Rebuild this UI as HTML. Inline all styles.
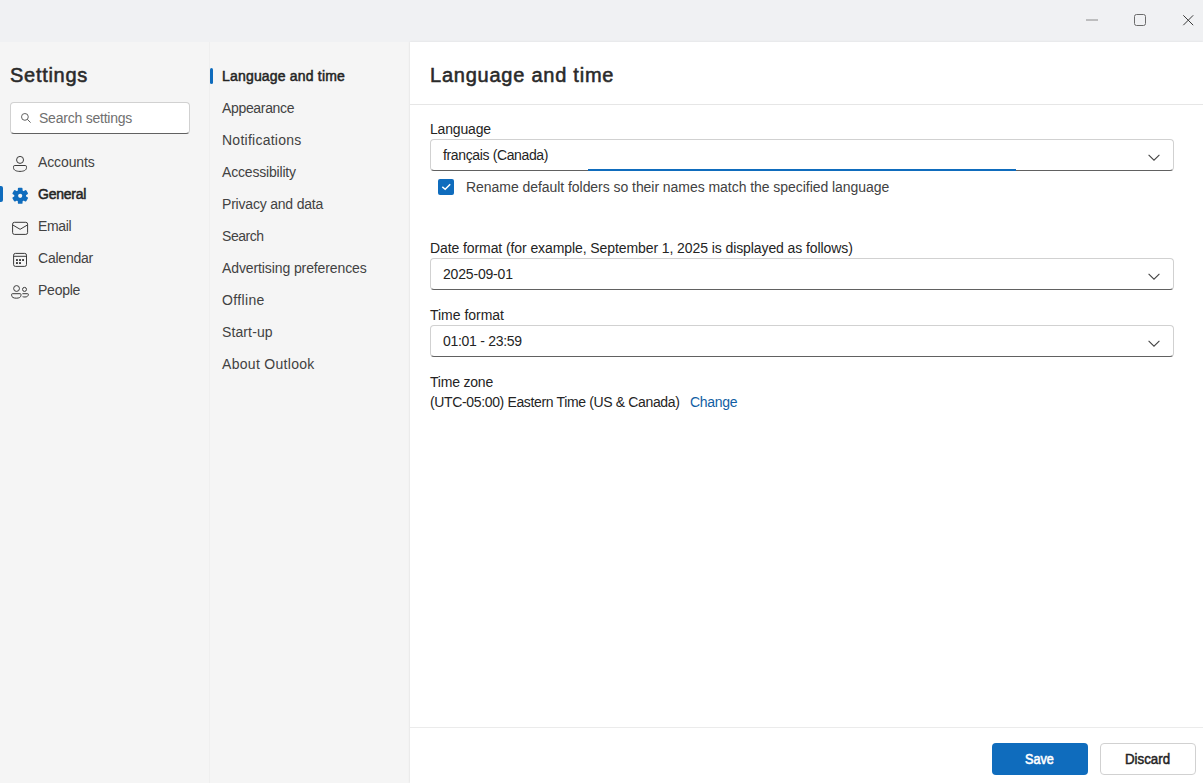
<!DOCTYPE html>
<html><head><meta charset="utf-8">
<style>
*{box-sizing:border-box;margin:0;padding:0}
html,body{width:1203px;height:783px;overflow:hidden;background:#fff}
body{font-family:"Liberation Sans",sans-serif;color:#242424;position:relative}
.abs{position:absolute;white-space:nowrap}
#titlebar{position:absolute;left:0;top:0;width:1203px;height:42px;background:#f0f1f3}
#nav1{position:absolute;left:0;top:42px;width:209px;height:741px;background:#f5f5f5}
#nav2{position:absolute;left:209px;top:42px;width:201px;height:741px;background:#f5f5f5;border-left:1px solid #efefef}
#main{position:absolute;left:410px;top:42px;width:793px;height:741px;background:#fff;box-shadow:-1px 0 1.5px rgba(0,0,0,0.045), 0 -1px 1.5px rgba(0,0,0,0.03)}
.t14{font-size:14px;line-height:20px;height:20px}
.t20{color:#2a2a2a;font-size:20px;line-height:28px;height:28px;font-weight:normal;-webkit-text-stroke:0.55px currentColor}
.sec{color:#424242}
.bold{font-weight:normal;-webkit-text-stroke:0.5px currentColor}
.dd{position:absolute;left:430px;width:744px;height:32px;border:1px solid #d1d1d1;border-bottom-color:#616161;border-radius:4px;background:#fff}
.chev{position:absolute;left:1148px;width:12px;height:7px}
/*LS*/#settings{letter-spacing:0.714px}#searchph{letter-spacing:-0.227px}#n_accounts{letter-spacing:-0.112px}#n_general{letter-spacing:-0.235px}#n_email{letter-spacing:-0.35px}#n_calendar{letter-spacing:-0.224px}#n_people{letter-spacing:-0.24px}#s0{letter-spacing:0.188px}#s1{letter-spacing:-0.334px}#s2{letter-spacing:0.25px}#s3{letter-spacing:-0.18px}#s4{letter-spacing:-0.2px}#s5{letter-spacing:-0.44px}#s6{letter-spacing:-0.104px}#s7{letter-spacing:0.365px}#s8{letter-spacing:0.112px}#s9{letter-spacing:0.298px}#m_title{letter-spacing:0.761px}#l_lang{letter-spacing:-0.174px}#v_lang{letter-spacing:-0.365px}#v_rename{letter-spacing:-0.049px}#l_date{letter-spacing:-0.088px}#v_date{letter-spacing:-0.18px}#l_time{letter-spacing:-0.02px}#v_time{letter-spacing:-0.286px}#l_tz{letter-spacing:-0.2px}#v_tz{letter-spacing:-0.355px}#v_change{letter-spacing:-0.28px}/*ENDLS*/
</style></head>
<body>
<div id="titlebar"></div>
<!-- window controls -->
<svg class="abs" style="left:1080px;top:8px" width="120" height="26" viewBox="0 0 120 26">
  <line x1="6" y1="12" x2="18" y2="12" stroke="#8a8a8a" stroke-width="1"/>
  <rect x="54.5" y="6.5" width="11" height="11" rx="2" fill="none" stroke="#6b6b6b" stroke-width="1"/>
  <path d="M103.3 7.3 L113.2 17.2 M113.2 7.3 L103.3 17.2" stroke="#3a3a3a" stroke-width="1" fill="none"/>
</svg>

<div id="nav1"></div>
<div id="nav2"></div>
<div id="main"></div>

<!-- nav1 -->
<div id="settings" class="abs t20" style="left:10px;top:61px">Settings</div>
<div class="abs" style="left:10px;top:102px;width:180px;height:32px;background:#fff;border:1px solid #d1d1d1;border-bottom-color:#616161;border-radius:4px"></div>
<svg class="abs" style="left:0;top:100px" width="40" height="30" viewBox="0 100 40 30">
  <circle cx="24.9" cy="116.9" r="3.4" fill="none" stroke="#616161" stroke-width="1"/>
  <line x1="27.3" y1="119.3" x2="30.6" y2="122.6" stroke="#616161" stroke-width="1"/>
</svg>
<div id="searchph" class="abs t14" style="left:39px;top:108px;color:#707070">Search settings</div>

<svg id="navicons" class="abs" style="left:0;top:0" width="40" height="310" viewBox="0 0 40 310">
<g fill="none" stroke="#3b3b3b" stroke-width="1">
<circle cx="20.05" cy="159.9" r="3.5"/>
<path d="M14.8 165.5 H25.2 Q26.5 165.5 26.5 166.8 V167.6 C26.5 170.3 23.6 171.4 20 171.4 C16.4 171.4 13.5 170.3 13.5 167.6 V166.8 Q13.5 165.5 14.8 165.5 Z"/>
<rect x="12.6" y="222.3" width="15" height="12.1" rx="1.8"/>
<path d="M12.8 225 L20.1 229.3 L27.4 225"/>
<rect x="13.6" y="253.4" width="12.9" height="13" rx="1.8"/>
<line x1="13.6" y1="256.3" x2="26.5" y2="256.3"/>
<circle cx="16.55" cy="288.5" r="2.9"/>
<circle cx="24.5" cy="289.4" r="2.0"/>
<path d="M12.4 293.7 H20.2 Q21 293.7 21 294.5 V295.2 C21 297.3 19 298.2 16.3 298.2 C13.6 298.2 11.6 297.3 11.6 295.2 V294.5 Q11.6 293.7 12.4 293.7 Z"/>
<path d="M22.4 293.7 H27.7 Q28.4 293.7 28.4 294.4 C28.4 296 27 297 25 297 C24 297 23.3 296.9 22.6 296.7"/>
</g>
<g fill="#3b3b3b"><rect x="16" y="259.1" width="1.9" height="1.9"/><rect x="19.05" y="259.1" width="1.9" height="1.9"/><rect x="22.1" y="259.1" width="1.9" height="1.9"/><rect x="16" y="262.1" width="1.9" height="1.9"/><rect x="19.05" y="262.1" width="1.9" height="1.9"/></g>
<g fill="#0f6cbd"><circle cx="20.2" cy="195.8" r="5.9"/><rect x="17.85" y="187.80" width="4.7" height="16.0" rx="0.9" transform="rotate(0 20.2 195.8)"/><rect x="17.85" y="187.80" width="4.7" height="16.0" rx="0.9" transform="rotate(60 20.2 195.8)"/><rect x="17.85" y="187.80" width="4.7" height="16.0" rx="0.9" transform="rotate(120 20.2 195.8)"/></g><circle cx="20.2" cy="195.8" r="2.1" fill="#f5f5f5"/>
</svg>
<div id="n_accounts" class="abs t14 sec" style="left:38px;top:152px">Accounts</div>
<div class="abs" style="left:0;top:186px;width:3px;height:16px;background:#0f6cbd;border-radius:0 2px 2px 0"></div>
<div id="n_general" class="abs t14 bold" style="left:38px;top:184px">General</div>
<div id="n_email" class="abs t14 sec" style="left:38px;top:216px">Email</div>
<div id="n_calendar" class="abs t14 sec" style="left:38px;top:248px">Calendar</div>
<div id="n_people" class="abs t14 sec" style="left:38px;top:280px">People</div>

<!-- nav2 -->
<div class="abs" style="left:210px;top:68px;width:3px;height:16px;background:#0f6cbd;border-radius:2px"></div>
<div id="s0" class="abs t14 bold" style="left:222px;top:66px">Language and time</div>
<div id="s1" class="abs t14 sec" style="left:222px;top:98px">Appearance</div>
<div id="s2" class="abs t14 sec" style="left:222px;top:130px">Notifications</div>
<div id="s3" class="abs t14 sec" style="left:222px;top:162px">Accessibility</div>
<div id="s4" class="abs t14 sec" style="left:222px;top:194px">Privacy and data</div>
<div id="s5" class="abs t14 sec" style="left:222px;top:226px">Search</div>
<div id="s6" class="abs t14 sec" style="left:222px;top:258px">Advertising preferences</div>
<div id="s7" class="abs t14 sec" style="left:222px;top:290px">Offline</div>
<div id="s8" class="abs t14 sec" style="left:222px;top:322px">Start-up</div>
<div id="s9" class="abs t14 sec" style="left:222px;top:354px">About Outlook</div>

<!-- main -->
<div id="m_title" class="abs t20" style="left:430px;top:61px">Language and time</div>
<div class="abs" style="left:410px;top:104px;width:793px;height:1px;background:#e6e6e6"></div>

<div id="l_lang" class="abs t14" style="left:430px;top:119px">Language</div>
<div class="dd" style="top:139px"></div>
<div class="abs" style="left:588px;top:169px;width:428px;height:2px;background:#0f6cbd"></div>
<div id="v_lang" class="abs t14" style="left:443px;top:145px">français (Canada)</div>
<svg class="chev" style="top:154px" viewBox="0 0 12 7"><path d="M0.6 0.8 L6 6.2 L11.4 0.8" fill="none" stroke="#424242" stroke-width="1.05"/></svg>

<div class="abs" style="left:438px;top:179px;width:16px;height:16px;background:#0f6cbd;border-radius:2px"></div>
<svg class="abs" style="left:438px;top:179px" width="16" height="16" viewBox="0 0 16 16"><path d="M4.3 7.9 L7.2 10.3 L12.2 5.2" fill="none" stroke="#fff" stroke-width="1.5"/></svg>
<div id="v_rename" class="abs t14 sec" style="left:466px;top:177px">Rename default folders so their names match the specified language</div>

<div id="l_date" class="abs t14" style="left:430px;top:238px">Date format (for example, September 1, 2025 is displayed as follows)</div>
<div class="dd" style="top:258px"></div>
<div id="v_date" class="abs t14" style="left:443px;top:264px">2025-09-01</div>
<svg class="chev" style="top:273px" viewBox="0 0 12 7"><path d="M0.6 0.8 L6 6.2 L11.4 0.8" fill="none" stroke="#424242" stroke-width="1.05"/></svg>

<div id="l_time" class="abs t14" style="left:430px;top:305px">Time format</div>
<div class="dd" style="top:325px"></div>
<div id="v_time" class="abs t14" style="left:443px;top:331px">01:01 - 23:59</div>
<svg class="chev" style="top:340px" viewBox="0 0 12 7"><path d="M0.6 0.8 L6 6.2 L11.4 0.8" fill="none" stroke="#424242" stroke-width="1.05"/></svg>

<div id="l_tz" class="abs t14" style="left:430px;top:372px">Time zone</div>
<div id="v_tz" class="abs t14" style="left:430px;top:392px">(UTC-05:00) Eastern Time (US &amp; Canada)</div>
<div id="v_change" class="abs t14" style="left:690px;top:392px;color:#115ea3">Change</div>

<!-- footer -->
<div class="abs" style="left:410px;top:727px;width:793px;height:1px;background:#ebebeb"></div>
<div class="abs" style="left:992px;top:743px;width:96px;height:32px;background:#0f6cbd;border-radius:4px"></div>
<div id="b_save" class="abs t14 bold" style="left:1025px;top:749px;color:#fff;-webkit-text-stroke:0.6px #fff;transform:scaleX(0.9);transform-origin:0 0">Save</div>
<div class="abs" style="left:1100px;top:743px;width:96px;height:32px;background:#fff;border:1px solid #d1d1d1;border-radius:4px"></div>
<div id="b_discard" class="abs t14 bold" style="left:1125px;top:749px;transform:scaleX(0.95);transform-origin:0 0">Discard</div>
</body></html>
